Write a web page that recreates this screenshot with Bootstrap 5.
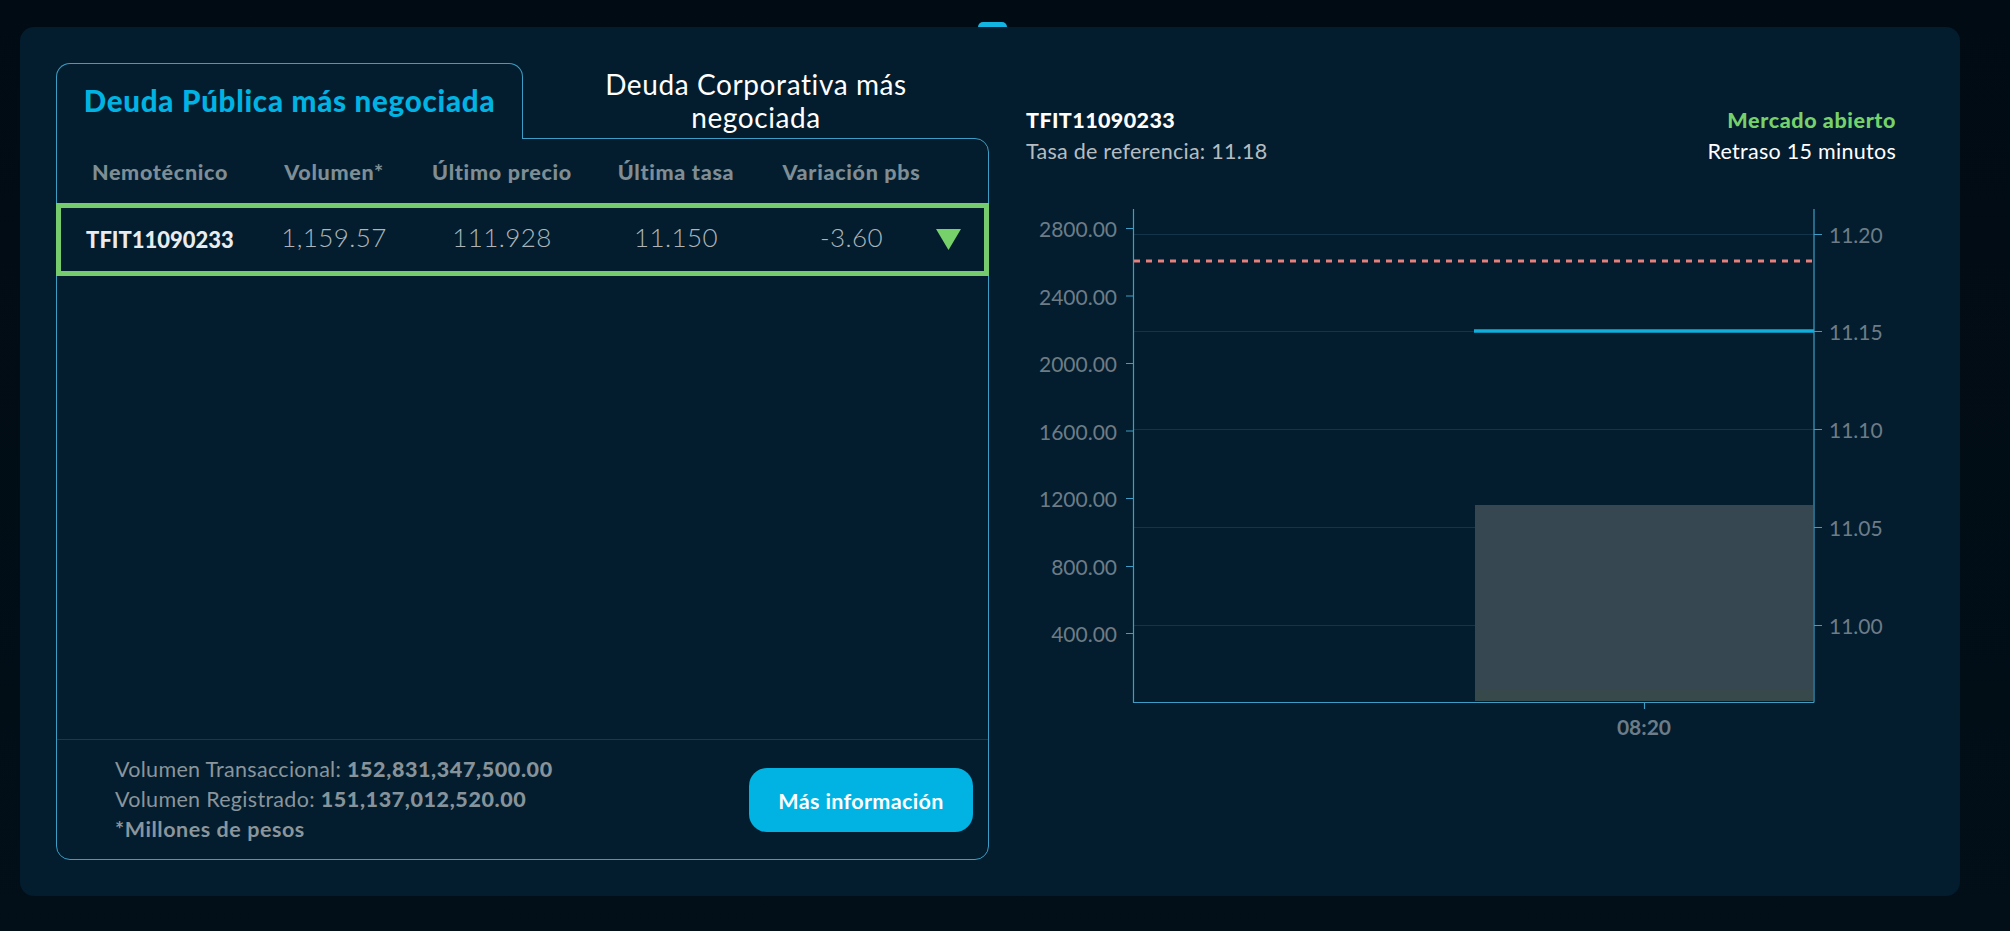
<!DOCTYPE html>
<html lang="es">
<head>
<meta charset="utf-8">
<title>Deuda más negociada</title>
<link href="https://cdn.jsdelivr.net/npm/bootstrap@5.3.0/dist/css/bootstrap.min.css" rel="stylesheet">
<style>
html,body{height:931px;overflow:hidden}
body{background:linear-gradient(180deg,#010b13 0,#020f18 100%);font-family:"Lato","Liberation Sans",sans-serif;color:#fff}
.stage{position:relative;padding:27px 50px 35px 20px;height:931px}
.pip{position:absolute;left:978px;top:22px;width:29px;height:10px;background:#12b4e2;border-radius:5px 5px 0 0}
.sheet{position:relative;background:#031d2e;border-radius:14px;height:869px;padding:36px 0 0 36px;gap:37px}
.lefty{width:933px;flex:none}
.tabrow{height:76px;position:relative;z-index:1}
.tab-on{width:467px;height:76px;border:1px solid #3d9dc4;border-bottom:0;border-radius:14px 14px 0 0;background:#031d2e;color:#00b3e3;font-weight:900;font-size:29.5px;letter-spacing:.75px;padding-top:19px;line-height:36px;text-align:center;margin-bottom:-1px;z-index:2;position:relative}
.tab-off{flex:1;font-size:28px;letter-spacing:.6px;line-height:33px;color:#fff;text-align:center;padding:0 60px;margin-top:5px;height:70px}
.datacard{height:722px;margin-top:-1px;border:1px solid #3d9dc4;border-radius:0 14px 14px 14px;background:#031d2e}
.colgrid{display:grid;grid-template-columns:170px 178px 158px 190px 161px 25px;align-items:center;text-align:center}
.headrow{height:64px;padding:2px 0 0 18px;color:#7f8d95;font-weight:900;font-size:21.5px;letter-spacing:.7px}
.bondrow{height:73px;padding-left:14px;margin-left:-1px;margin-right:-1px;border:5px solid #76cb6c;color:#adb5bb;font-size:26px;letter-spacing:.4px;font-weight:300}
.bondrow>div{padding-bottom:4px}
.bondrow>.bondname{font-weight:900;font-size:22px;color:#e8ecee;letter-spacing:0;padding-bottom:1px}
.fall{width:25px;height:21px;margin-left:4px;display:block}
.footbar{border-top:1px solid #17394e;height:120px;padding:14px 15px 0 58px;color:#8a959c;font-size:21.5px;letter-spacing:.3px;line-height:30px}
.footbar b{font-weight:900;letter-spacing:.6px;color:#87939a}
.notemil{font-weight:700;letter-spacing:.55px}
.morebtn{width:224px;height:64px;border-radius:18px;background:#00b3e3;color:#fff;font-weight:700;font-size:21.5px;letter-spacing:.35px;border:0;margin-top:14px;padding-top:8px}
.morebtn:hover{background:#00b3e3;color:#fff}
.chartside{width:870px;flex:none}
.charthead{padding-top:42px;height:146px;font-size:21.5px;line-height:31px}
.ttl{font-weight:900;color:#fff;letter-spacing:.4px}
.sub{color:#b5bdc2;letter-spacing:.25px}
.openmk{font-weight:900;color:#76d16b;letter-spacing:.6px}
.delaytxt{letter-spacing:.28px}
.axislabel{font-family:"Lato","Liberation Sans",sans-serif;font-size:21px;fill:#6d7c86}
</style>
</head>
<body>
<div class="stage">
  <div class="pip"></div>
  <div class="sheet d-flex">
    <div class="lefty">
      <div class="tabrow d-flex">
        <div class="tab-on">Deuda Pública más negociada</div>
        <div class="tab-off">Deuda Corporativa más negociada</div>
      </div>
      <div class="datacard d-flex flex-column">
        <div class="headrow colgrid">
          <div>Nemotécnico</div>
          <div>Volumen*</div>
          <div>Último precio</div>
          <div>Última tasa</div>
          <div>Variación pbs</div>
        </div>
        <div class="bondrow colgrid">
          <div class="bondname">TFIT11090233</div>
          <div>1,159.57</div>
          <div>111.928</div>
          <div>11.150</div>
          <div>-3.60</div>
          <svg class="fall" viewBox="0 0 25 21"><path d="M0 0H25L12.5 21Z" fill="#76d16b"/></svg>
        </div>
        <div class="flex-grow-1"></div>
        <div class="footbar d-flex justify-content-between">
          <div>
            <div>Volumen Transaccional: <b>152,831,347,500.00</b></div>
            <div>Volumen Registrado: <b>151,137,012,520.00</b></div>
            <div class="notemil">*Millones de pesos</div>
          </div>
          <button type="button" class="btn morebtn">Más información</button>
        </div>
      </div>
    </div>
    <div class="chartside">
      <div class="charthead d-flex justify-content-between">
        <div>
          <div class="ttl">TFIT11090233</div>
          <div class="sub">Tasa de referencia: 11.18</div>
        </div>
        <div class="text-end">
          <div class="openmk">Mercado abierto</div>
          <div class="delaytxt">Retraso 15 minutos</div>
        </div>
      </div>
      <svg width="900" height="560" viewBox="1026 209 900 560" class="d-block" aria-label="Gráfico">
        <g stroke="#13344a" stroke-width="1">
          <path d="M1133 234.5H1814M1133 331.5H1814M1133 429.5H1814M1133 527.5H1475M1133 625.5H1475"/>
        </g>
        <rect x="1475" y="505" width="338" height="196" fill="#364752"/>
        <rect x="1475" y="690" width="338" height="11" fill="#38494c"/>
        <path d="M1134 261H1814" stroke="#e77f7a" stroke-width="3" stroke-dasharray="6 6"/>
        <path d="M1474 331H1814" stroke="#12aedb" stroke-width="3.4"/>
        <g stroke="#3d9dc4" stroke-width="1.2" fill="none">
          <path d="M1133.5 209V702.5H1814M1814 209V702.5"/>
          <path d="M1126 228.5H1133M1126 296H1133M1126 363.5H1133M1126 431H1133M1126 498.5H1133M1126 566.5H1133M1126 633.5H1133"/>
          <path d="M1814 234.5H1822M1814 331.5H1822M1814 429.5H1822M1814 527.5H1822M1814 625.5H1822"/>
          <path d="M1644.5 702V709"/>
        </g>
        <g class="axislabel" text-anchor="end">
          <text x="1117" y="237">2800.00</text>
          <text x="1117" y="305">2400.00</text>
          <text x="1117" y="372">2000.00</text>
          <text x="1117" y="440">1600.00</text>
          <text x="1117" y="507">1200.00</text>
          <text x="1117" y="575">800.00</text>
          <text x="1117" y="642">400.00</text>
        </g>
        <g class="axislabel">
          <text x="1829" y="243">11.20</text>
          <text x="1829" y="340">11.15</text>
          <text x="1829" y="438">11.10</text>
          <text x="1829" y="536">11.05</text>
          <text x="1829" y="634">11.00</text>
        </g>
        <text class="axislabel fw-bold" x="1644" y="735" text-anchor="middle">08:20</text>
      </svg>
    </div>
  </div>
</div>
<script src="https://cdn.jsdelivr.net/npm/bootstrap@5.3.0/dist/js/bootstrap.bundle.min.js"></script>
</body>
</html>
